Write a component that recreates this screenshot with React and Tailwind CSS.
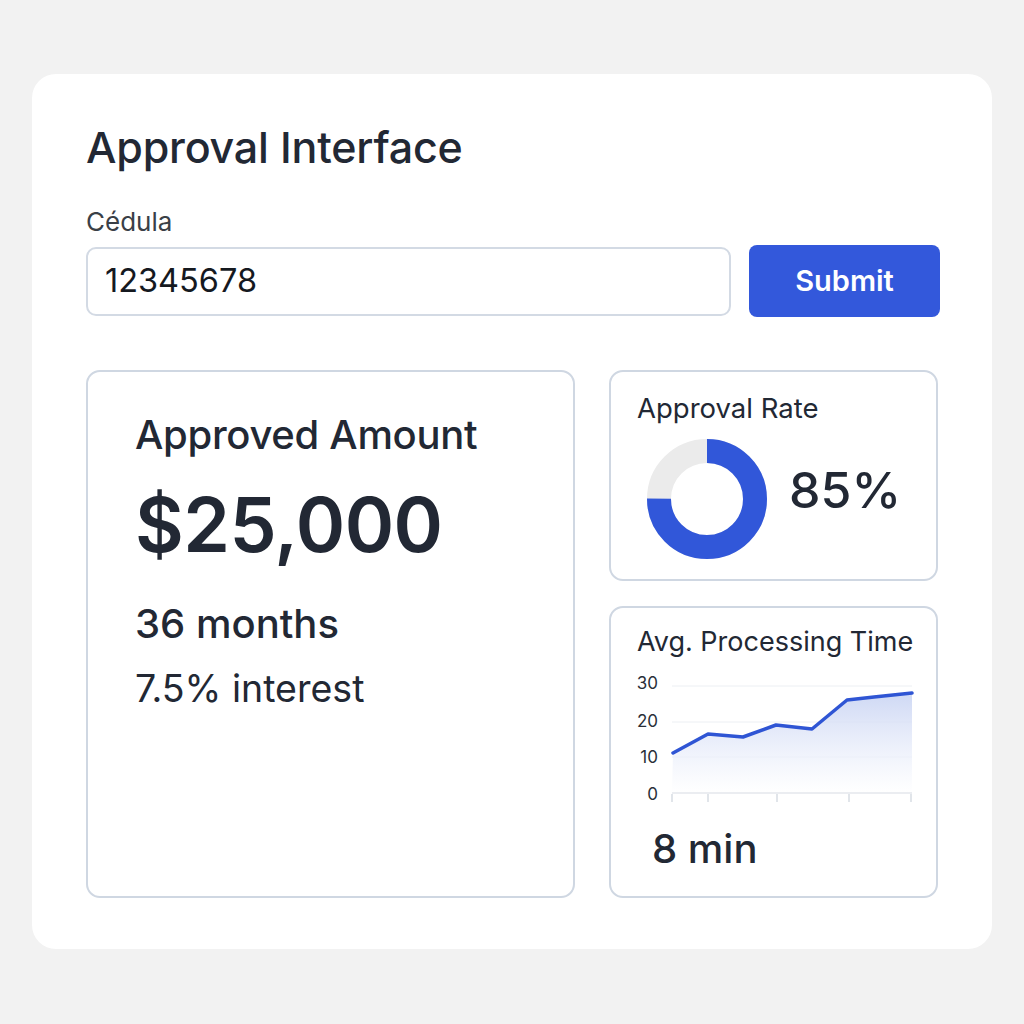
const font = { fontFamily: 'Inter, "Noto Sans", sans-serif' };

const points = [
  [51, 82], [86, 63], [121, 66], [154, 54], [190, 58], [225, 29], [252, 26], [290, 22],
];

function LineChart() {
  const line = points.map(([x, y]) => `${x},${y}`).join(' ');
  const area = `M50,122 L${line.replace(/ /g, ' L')} L290,122 Z`;
  return (
    <svg width="300" height="135" viewBox="0 0 300 135" className="block">
      <defs>
        <linearGradient id="fill" x1="0" y1="0" x2="0" y2="1">
          <stop offset="0%" stopColor="#c9d4f3" stopOpacity="0.9" />
          <stop offset="100%" stopColor="#ffffff" stopOpacity="0.6" />
        </linearGradient>
      </defs>
      {[15, 51, 86].map(y => (
        <line key={y} x1="50" x2="290" y1={y} y2={y} stroke="#eceff3" strokeWidth="1" />
      ))}
      <path d={area} fill="url(#fill)" />
      <line x1="50" x2="290" y1="122" y2="122" stroke="#d7dce3" strokeWidth="1.2" />
      {[50, 86, 155, 227, 289].map(x => (
        <line key={x} x1={x} x2={x} y1="123" y2="131" stroke="#d7dce3" strokeWidth="1.5" />
      ))}
      <polyline points={line} fill="none" stroke="#2f55d4" strokeWidth="3.5" strokeLinejoin="round" strokeLinecap="round" />
      {[['30', 12], ['20', 50], ['10', 86], ['0', 123]].map(([t, y]) => (
        <text key={t} x="36" y={y + 6} textAnchor="end" fontSize="17" fill="#2a2f38" style={font}>{t}</text>
      ))}
    </svg>
  );
}

function Donut() {
  const c = 2 * Math.PI * 48;
  return (
    <svg width="120" height="120" viewBox="0 0 120 120" className="block shrink-0">
      <circle cx="60" cy="60" r="48" fill="none" stroke="#ebebeb" strokeWidth="24" />
      <circle
        cx="60" cy="60" r="48" fill="none" stroke="#3157d9" strokeWidth="24"
        strokeDasharray={`${c * 0.75} ${c}`} transform="rotate(-90 60 60)"
      />
    </svg>
  );
}

export default function App() {
  return (
    <div className="min-h-screen bg-[#f2f2f2] pt-[74px] pb-[75px]" style={font}>
      <div className="mx-[32px] bg-white rounded-[24px] px-[54px] pt-[47px] pb-[51px] text-[#222834]">
        <h1 className="text-[43px] leading-[52px] font-medium tracking-[-0.2px]">Approval Interface</h1>

        <label className="block mt-[33px] text-[26px] leading-[32px] text-[#3a3f47]">Cédula</label>
        <div className="flex items-center gap-[18px] mt-[7px] mr-[-2px]">
          <div className="flex-1 h-[69px] rounded-[10px] border-2 border-[#d3dae4] flex items-center px-[17px] text-[32.5px] text-[#15191f]">
            12345678
          </div>
          <button className="w-[191px] h-[72px] rounded-[8px] bg-[#3358db] text-white text-[29px] font-semibold">
            Submit
          </button>
        </div>

        <div className="flex gap-[34px] mt-[53px]">
          <div className="w-[489px] h-[528px] border-2 border-[#cfd7e2] rounded-[14px] pl-[47px] pt-[39px]">
            <div className="text-[40px] leading-[48px] font-medium tracking-[-0.3px]">Approved Amount</div>
            <div className="mt-[22px] text-[75px] leading-[88px] font-semibold tracking-[-0.5px]">$25,000</div>
            <div className="mt-[32px] text-[40px] leading-[46px] font-medium">36 months</div>
            <div className="mt-[20px] text-[37.5px] leading-[44px] font-normal">7.5% interest</div>
          </div>

          <div className="w-[329px] flex flex-col gap-[25px]">
            <div className="h-[211px] border-2 border-[#cfd7e2] rounded-[14px] pl-[26px] pt-[20px]">
              <div className="text-[27.5px] leading-[32px]">Approval Rate</div>
              <div className="flex items-center mt-[15px] ml-[10px] gap-[22px]">
                <Donut />
                <div className="text-[50px] leading-[60px] font-medium -mt-[18px]">85%</div>
              </div>
            </div>

            <div className="h-[292px] border-2 border-[#cfd7e2] rounded-[14px] pl-[26px] pt-[18px]">
              <div className="text-[27px] leading-[32px] whitespace-nowrap">Avg. Processing Time</div>
              <div className="mt-[13px] -ml-[15px]">
                <LineChart />
              </div>
              <div className="mt-[19px] ml-[15px] text-[40px] leading-[48px] font-medium">8 min</div>
            </div>
          </div>
        </div>
      </div>
    </div>
  );
}
